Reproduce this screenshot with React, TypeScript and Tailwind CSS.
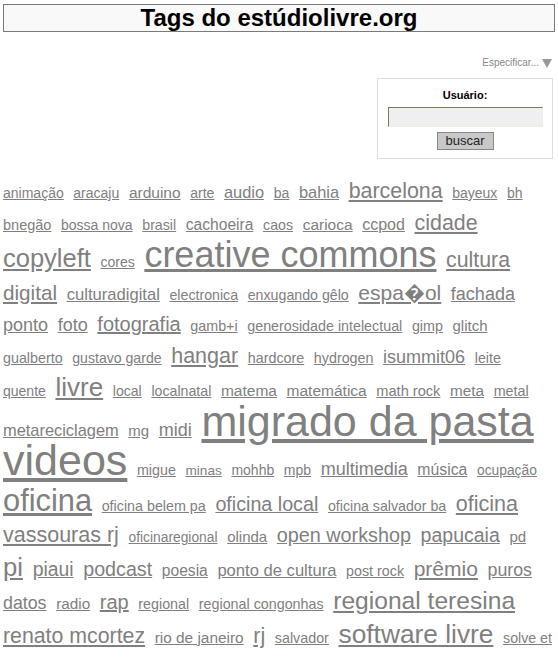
const tags: [string, string][] = [
  ["animação", "text-[14px]"],
  ["aracaju", "text-[14px]"],
  ["arduino", "text-[15.5px]"],
  ["arte", "text-[14px]"],
  ["audio", "text-[16.4px]"],
  ["ba", "text-[14px]"],
  ["bahia", "text-[16.4px]"],
  ["barcelona", "text-[21.4px]"],
  ["bayeux", "text-[14px]"],
  ["bh", "text-[14px]"],
  ["bnegão", "text-[14.5px]"],
  ["bossa nova", "text-[14px]"],
  ["brasil", "text-[14.2px]"],
  ["cachoeira", "text-[15.6px]"],
  ["caos", "text-[14.2px]"],
  ["carioca", "text-[15.5px]"],
  ["ccpod", "text-[16px]"],
  ["cidade", "text-[21.4px]"],
  ["copyleft", "text-[25.5px]"],
  ["cores", "text-[14px]"],
  ["creative commons", "text-[36px]"],
  ["cultura", "text-[21.3px]"],
  ["digital", "text-[20.7px]"],
  ["culturadigital", "text-[16.6px]"],
  ["electronica", "text-[14.2px]"],
  ["enxugando gêlo", "text-[14.2px]"],
  ["espa\uFFFDol", "text-[21px]"],
  ["fachada", "text-[18px]"],
  ["ponto", "text-[18px]"],
  ["foto", "text-[18px]"],
  ["fotografia", "text-[20px]"],
  ["gamb+i", "text-[14.3px]"],
  ["generosidade intelectual", "text-[14.3px]"],
  ["gimp", "text-[14.3px]"],
  ["glitch", "text-[15px]"],
  ["gualberto", "text-[14.3px]"],
  ["gustavo garde", "text-[14.1px]"],
  ["hangar", "text-[21.5px]"],
  ["hardcore", "text-[14.3px]"],
  ["hydrogen", "text-[14.3px]"],
  ["isummit06", "text-[18px]"],
  ["leite", "text-[14.2px]"],
  ["quente", "text-[14px]"],
  ["livre", "text-[26px]"],
  ["local", "text-[14.1px]"],
  ["localnatal", "text-[14.2px]"],
  ["matema", "text-[15.5px]"],
  ["matemática", "text-[15.5px]"],
  ["math rock", "text-[14.6px]"],
  ["meta", "text-[15.3px]"],
  ["metal", "text-[14.3px]"],
  ["metareciclagem", "text-[16.4px]"],
  ["mg", "text-[15px]"],
  ["midi", "text-[18px]"],
  ["migrado da pasta", "text-[43px]"],
  ["videos", "text-[43px]"],
  ["migue", "text-[14.3px]"],
  ["minas", "text-[13.6px]"],
  ["mohhb", "text-[14px]"],
  ["mpb", "text-[14px]"],
  ["multimedia", "text-[18px]"],
  ["música", "text-[15.8px]"],
  ["ocupação", "text-[13.8px]"],
  ["oficina", "text-[30.8px]"],
  ["oficina belem pa", "text-[14.3px]"],
  ["oficina local", "text-[19.7px]"],
  ["oficina salvador ba", "text-[14.2px]"],
  ["oficina vassouras rj", "text-[21.5px]"],
  ["oficinaregional", "text-[13.8px]"],
  ["olinda", "text-[15px]"],
  ["open workshop", "text-[19.8px]"],
  ["papucaia", "text-[19.5px]"],
  ["pd", "text-[15px]"],
  ["pi", "text-[25.7px]"],
  ["piaui", "text-[19.4px]"],
  ["podcast", "text-[19.7px]"],
  ["poesia", "text-[15.6px]"],
  ["ponto de cultura", "text-[16.6px]"],
  ["post rock", "text-[14.3px]"],
  ["prêmio", "text-[21px]"],
  ["puros datos", "text-[17.8px]"],
  ["radio", "text-[15.3px]"],
  ["rap", "text-[20px]"],
  ["regional", "text-[14.3px]"],
  ["regional congonhas", "text-[14.3px]"],
  ["regional teresina", "text-[24.6px]"],
  ["renato mcortez", "text-[21.3px]"],
  ["rio de janeiro", "text-[15.4px]"],
  ["rj", "text-[21.5px]"],
  ["salvador", "text-[14.3px]"],
  ["software livre", "text-[26.3px]"],
  ["solve et coagula", "text-[14.2px]"],
];

export default function App() {
  return (
    <div className="h-screen overflow-hidden bg-white font-['Liberation_Sans',Arial,sans-serif] text-black">
      {/* cabeçalho */}
      <h1 className="mx-[3px] mt-[4px] border border-[#7a7a7a] bg-[#f9f9f9] text-center text-[24px] font-bold leading-[26px]">
        Tags do estúdiolivre.org
      </h1>

      {/* busca por usuário */}
      <div className="mt-[25px] flex items-center justify-end gap-[3px] pr-[6px] text-[10px] leading-[12px] text-[#888]">
        <a href="#" className="no-underline">Especificar...</a>
        <svg width="10" height="9" viewBox="0 0 10 9">
          <path d="M0 0h10L5 9z" fill="#999" />
        </svg>
      </div>
      <div className="flex justify-end pr-[5px] pt-[9px]">
        <div className="flex w-[176px] flex-col items-center border border-[#ddd] pb-[8px] pt-[10px]">
          <span className="text-[11px] font-bold leading-[13px]">Usuário:</span>
          <input
            type="text"
            className="mt-[5px] h-[20px] w-[155px] border border-b-[#eeeedd] border-l-[#77775a] border-r-[#eeeedd] border-t-[#77775a] bg-[#efefef] outline-none"
          />
          <button className="mt-[5px] h-[18px] w-[57px] border border-[#888] bg-[#c8c8c8] text-[13px] leading-[16px] text-[#222]">
            buscar
          </button>
        </div>
      </div>

      {/* nuvem de tags */}
      <div className="mt-[18px] px-[3px] text-[13px] leading-[29.5px]">
        {tags.map(([name, size]) => (
          <span key={name + size}>
            <a href="#" className={`mr-[6px] text-[#808080] underline ${size}`}>
              {name}
            </a>{" "}
          </span>
        ))}
      </div>
    </div>
  );
}
